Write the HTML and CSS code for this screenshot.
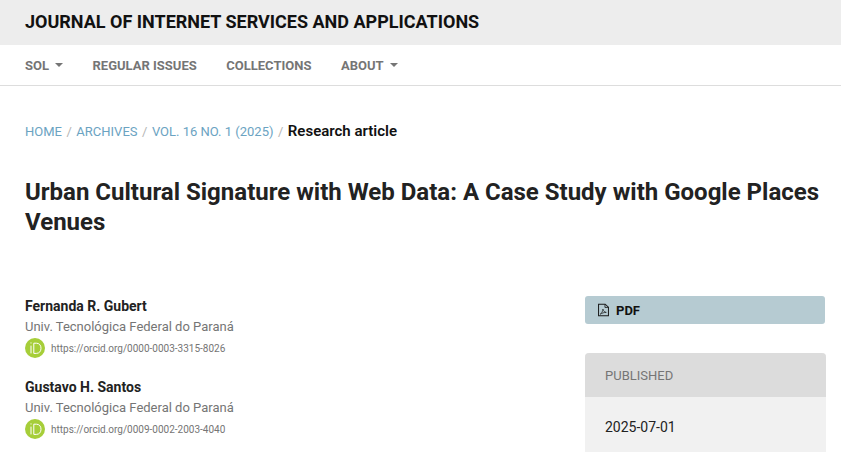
FILE: index.html
```html
<!DOCTYPE html>
<html lang="en">
<head>
<meta charset="utf-8">
<title>Urban Cultural Signature with Web Data</title>
<link rel="stylesheet" href="styles.css">
</head>
<body>
<header class="masthead"><a class="journal" href="#">JOURNAL OF INTERNET SERVICES AND APPLICATIONS</a></header>
<nav class="nav">
  <a href="#" class="nav-item">SOL<span class="caret"></span></a>
  <a href="#" class="nav-item">REGULAR ISSUES</a>
  <a href="#" class="nav-item">COLLECTIONS</a>
  <a href="#" class="nav-item">ABOUT<span class="caret"></span></a>
</nav>
<main class="page">
  <ol class="crumbs">
    <li><a href="#">HOME</a></li>
    <li class="sep">/</li>
    <li><a href="#">ARCHIVES</a></li>
    <li class="sep">/</li>
    <li><a href="#">VOL. 16 NO. 1 (2025)</a></li>
    <li class="sep">/</li>
    <li class="current">Research article</li>
  </ol>
  <h1 class="title">Urban Cultural Signature with Web Data: A Case Study with Google Places Venues</h1>
  <div class="columns">
    <section class="authors">
      <div class="author">
        <div class="name">Fernanda R. Gubert</div>
        <div class="affil">Univ. Tecnológica Federal do Paraná</div>
        <div class="orcid">
          <svg class="orcid-icon" viewBox="0 0 20 20" aria-hidden="true"><circle cx="10" cy="10" r="10" fill="#a6ce39"/><path d="M6 7.6v7.8M6 4.4v1.1" stroke="#fff" stroke-width="1" fill="none"/><path d="M8.8 5.2h2.6c3 0 4.6 2.2 4.6 5.1s-1.7 5.1-4.6 5.1H8.8z" stroke="#fff" stroke-width="1" fill="none"/></svg>
          <a href="#">https://orcid.org/0000-0003-3315-8026</a>
        </div>
      </div>
      <div class="author">
        <div class="name">Gustavo H. Santos</div>
        <div class="affil">Univ. Tecnológica Federal do Paraná</div>
        <div class="orcid">
          <svg class="orcid-icon" viewBox="0 0 20 20" aria-hidden="true"><circle cx="10" cy="10" r="10" fill="#a6ce39"/><path d="M6 7.6v7.8M6 4.4v1.1" stroke="#fff" stroke-width="1" fill="none"/><path d="M8.8 5.2h2.6c3 0 4.6 2.2 4.6 5.1s-1.7 5.1-4.6 5.1H8.8z" stroke="#fff" stroke-width="1" fill="none"/></svg>
          <a href="#">https://orcid.org/0009-0002-2003-4040</a>
        </div>
      </div>
    </section>
    <aside class="side">
      <a href="#" class="pdf">
        <svg class="pdf-icon" viewBox="0 0 12 14" aria-hidden="true"><path d="M.6.6h7.2l3.6 3.4v9.4H.6z" fill="none" stroke="#1a1a1a" stroke-width="1.1"/><path d="M7.6.8v3.4h3.6" fill="none" stroke="#1a1a1a" stroke-width=".9"/><path d="M2.4 11.6c1.6-1 2.8-3.2 3-5.6.3 2 1.6 3.4 3.6 3.6-2.4 0-4.6.8-6.6 2z" fill="none" stroke="#1a1a1a" stroke-width=".8"/></svg>
        PDF
      </a>
      <div class="card">
        <div class="card-head">PUBLISHED</div>
        <div class="card-body">2025-07-01</div>
      </div>
    </aside>
  </div>
</main>
</body>
</html>
```
FILE: styles.css
```css
* { box-sizing: border-box; }
html, body { margin: 0; height: 452px; overflow: hidden; }
body { background: #fff; font-family: Roboto, "Liberation Sans", sans-serif; color: #1a1a1a; }
a { text-decoration: none; color: inherit; }
.masthead { background: #ededed; height: 45px; padding: 0 25px 1px; display: flex; align-items: center; }
.journal { font-size: 18px; font-weight: 700; color: #111; line-height: 1; }
.nav { height: 41px; border-bottom: 1px solid #ddd; padding: 0 25px 0; display: flex; align-items: center; gap: 29.5px; }
.nav-item { font-size: 13px; font-weight: 700; color: #757575; display: flex; align-items: center; }
.caret { margin-left: 6px; width: 0; height: 0; border: 4px solid transparent; border-top-color: #757575; border-bottom: 0; }
.page { padding: 0 15px 0 25px; }
.crumbs { list-style: none; margin: 36px 0 0; padding: 0; display: flex; align-items: baseline; gap: 4.5px; font-size: 13px; height: 20px; }
.crumbs a { color: #6ba3c2; }
.sep { color: #b5b5b5; }
.current { font-size: 15px; font-weight: 600; color: #111; }
.title { margin: 35px 0 0; font-size: 24px; line-height: 30px; font-weight: 700; color: #222; }
.columns { margin-top: 59px; display: flex; justify-content: space-between; align-items: flex-start; }
.authors { width: 400px; }
.author { margin-bottom: 19px; }
.name { font-size: 14px; font-weight: 700; color: #222; line-height: 20px; }
.affil { font-size: 13px; color: #757575; line-height: 20px; margin-top: 1px; }
.orcid { display: flex; align-items: center; gap: 6px; font-size: 10px; color: #757575; height: 20px; margin-top: 1px; }
.orcid-icon { width: 20px; height: 20px; flex: none; }
.side { width: 241px; }
.pdf { display: flex; align-items: center; gap: 7px; height: 28px; width: 240px; padding-left: 13px; background: #b6cbd2; border-radius: 3px; font-size: 13px; font-weight: 700; color: #111; }
.pdf-icon { width: 11px; height: 14px; }
.card { margin-top: 29px; border-radius: 4px 4px 0 0; overflow: hidden; background: #f1f1f1; }
.card-head { height: 44px; background: #dcdcdc; padding: 0 20px; display: flex; align-items: center; font-size: 13px; color: #757575; }
.card-body { height: 70px; padding: 20px 20px; font-size: 14px; line-height: 20px; color: #222; }
```
